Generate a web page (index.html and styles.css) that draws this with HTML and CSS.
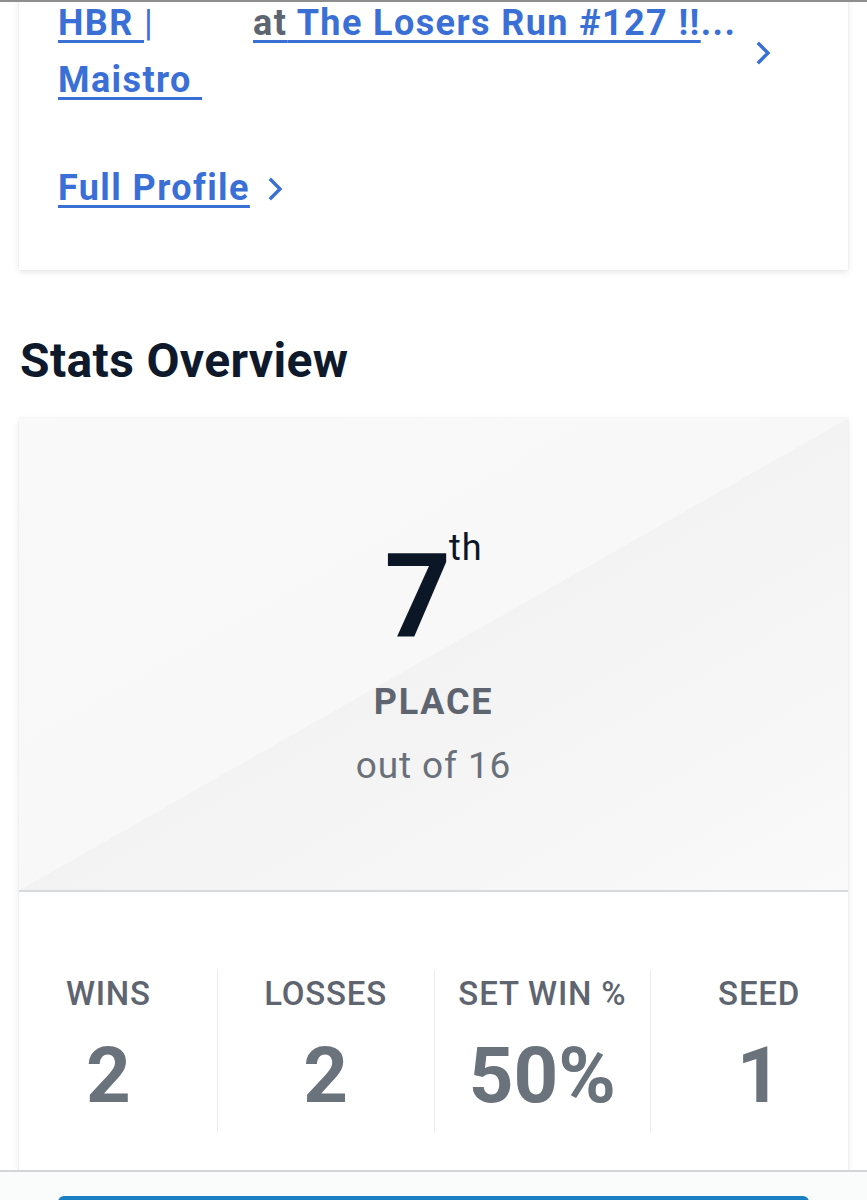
FILE: index.html
```html
<!DOCTYPE html>
<html lang="en">
<head>
<meta charset="utf-8">
<title>Stats Overview</title>
<link rel="stylesheet" href="styles.css">
</head>
<body>
<div class="topline"></div>
<main class="page">
  <section class="card profile-card">
    <div class="result-row">
      <div class="names"><a class="lnk" href="#">HBR </a><span class="sep">|</span> <a class="lnk" href="#">Maistro&nbsp;</a></div>
      <div class="event"><a class="lnk" href="#"><span class="muted">at</span> The Losers Run #127 !!</a><span class="dots">...</span></div>
      <svg class="chev chev-row" viewBox="0 0 16 24" aria-hidden="true"><polyline points="3,3 12,12 3,21" /></svg>
    </div>
    <div class="full-profile">
      <a class="lnk" href="#">Full Profile</a>
      <svg class="chev chev-fp" viewBox="0 0 16 24" aria-hidden="true"><polyline points="3,3 12,12 3,21" /></svg>
    </div>
  </section>

  <h2 class="section-title">Stats Overview</h2>

  <section class="card stats-card">
    <div class="placement">
      <div class="rank"><span class="rank-num">7</span><span class="rank-sup">th</span></div>
      <div class="place-label">PLACE</div>
      <div class="place-of">out of 16</div>
    </div>
    <div class="stats-body">
      <div class="stats-row">
        <div class="stat"><div class="stat-label">WINS</div><div class="stat-value">2</div></div>
        <div class="stat"><div class="stat-label">LOSSES</div><div class="stat-value">2</div></div>
        <div class="stat"><div class="stat-label">SET WIN %</div><div class="stat-value">50%</div></div>
        <div class="stat"><div class="stat-label">SEED</div><div class="stat-value">1</div></div>
      </div>
    </div>
  </section>
</main>
<footer class="footer">
  <div class="footer-btn"></div>
</footer>
</body>
</html>
```

FILE: styles.css
```css
* { box-sizing: border-box; }

html, body {
  margin: 0;
  padding: 0;
  background: #ffffff;
  font-family: Roboto, "Noto Sans", "Liberation Sans", sans-serif;
}

.topline {
  height: 2px;
  background: #8e8e8e;
  position: relative;
  z-index: 2;
}

.page {
  padding: 0 19px 200px;
}

.card {
  background: #ffffff;
  box-shadow: 0 2px 6px rgba(0, 0, 0, 0.10), 0 0 2px rgba(0, 0, 0, 0.05);
}

.profile-card {
  padding: 0 76px 53px 39px;
}

.lnk {
  color: #3a70d6;
  text-decoration: underline;
  text-decoration-thickness: 3px;
  text-underline-offset: 5px;
}

.result-row {
  display: flex;
  align-items: center;
  margin-top: -7px;
  font-size: 36px;
  font-weight: 700;
  line-height: 57px;
  letter-spacing: 1.4px;
}

.names {
  width: 195px;
  flex: none;
}

.sep {
  color: #3a70d6;
  font-weight: 400;
}

.event {
  flex: 1;
  align-self: flex-start;
  white-space: nowrap;
  overflow: hidden;
}

.muted {
  color: #5d6570;
}

.dots {
  color: #3a70d6;
}

.chev {
  flex: none;
  fill: none;
  stroke: #3a70d6;
  stroke-width: 3.4;
  stroke-linecap: square;
}

.chev-row {
  width: 16px;
  height: 24px;
  margin-left: 10px;
  margin-top: 2px;
}

.full-profile {
  display: flex;
  align-items: center;
  gap: 18px;
  margin-top: 51px;
  font-size: 36px;
  font-weight: 700;
  line-height: 57px;
  letter-spacing: 1.4px;
}

.chev-fp {
  width: 16px;
  height: 24px;
}

.section-title {
  margin: 62px 0 28px 1px;
  font-size: 48px;
  font-weight: 700;
  line-height: 1.2;
  letter-spacing: 0.35px;
  color: #0e1a2b;
}

.placement {
  padding: 120px 0 102px;
  text-align: center;
  background: linear-gradient(to bottom right, #f9f9f9 0%, #f8f8f8 50%, #f3f3f3 50.1%, #f6f6f6 75%, #fafafa 100%);
  border-bottom: 2px solid #d7dadd;
}

.rank {
  display: flex;
  justify-content: center;
  align-items: flex-start;
  color: #0b1726;
}

.rank-num {
  font-size: 116px;
  font-weight: 700;
  line-height: 116px;
}

.rank-sup {
  font-size: 36px;
  font-weight: 400;
  line-height: 36px;
  letter-spacing: 1px;
  margin: -8px 0 0 -2px;
}

.place-label {
  margin-top: 27px;
  font-size: 36px;
  font-weight: 700;
  line-height: 1.2;
  letter-spacing: 1.8px;
  color: #5e6570;
}

.place-of {
  margin-top: 20px;
  font-size: 37px;
  font-weight: 400;
  line-height: 1.2;
  letter-spacing: 0.9px;
  color: #6a707a;
}

.stats-body {
  padding: 78px 0 60px;
  background: #ffffff;
}

.stats-row {
  display: grid;
  grid-template-columns: repeat(4, 1fr);
  margin: 0 -19px;
}

.stat {
  padding: 4px 0 11px;
  text-align: center;
  border-left: 1px solid #ececec;
}

.stat:first-child {
  border-left: none;
}

.stat-label {
  font-size: 33px;
  font-weight: 500;
  line-height: 1.2;
  letter-spacing: 0.8px;
  color: #5e6570;
}

.stat-value {
  margin-top: 15px;
  font-size: 78px;
  font-weight: 700;
  line-height: 1.2;
  color: #6a727c;
}

.footer {
  position: fixed;
  left: 0;
  right: 0;
  bottom: 0;
  height: 30px;
  padding: 24px 58px 0;
  background: #fafbfb;
  border-top: 2px solid #d3d6d9;
  z-index: 3;
}

.footer-btn {
  height: 40px;
  border-radius: 6px;
  background: #1a7fc3;
}
```
